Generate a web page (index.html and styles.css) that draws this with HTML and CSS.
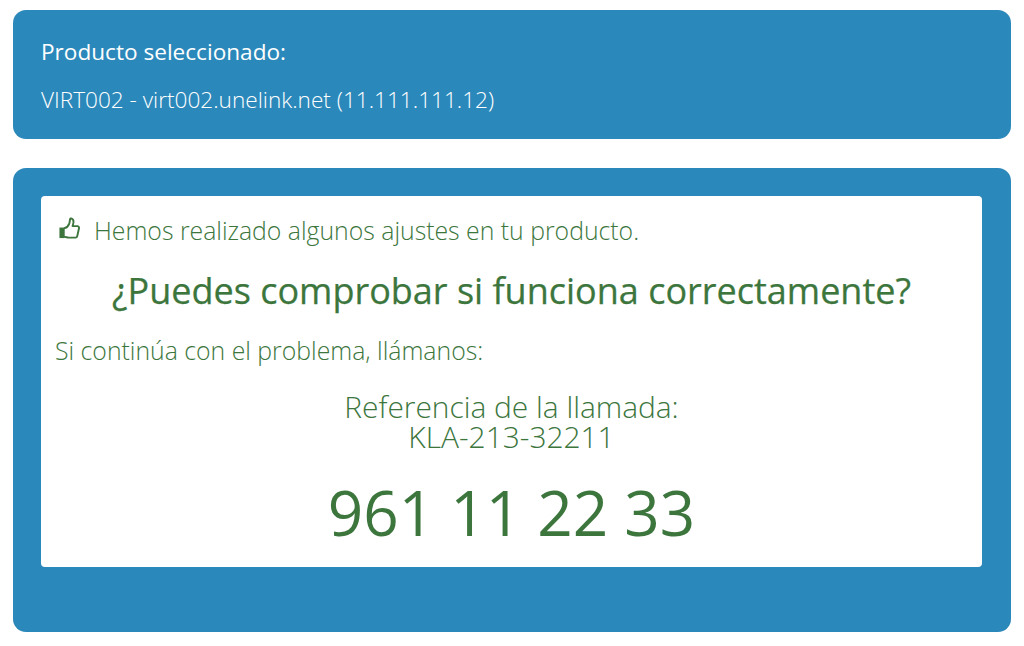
FILE: index.html
```html
<!DOCTYPE html>
<html lang="es">
<head>
<meta charset="utf-8">
<title>Producto seleccionado</title>
<link rel="stylesheet" href="styles.css">
</head>
<body>
<main class="page">
  <section class="card card-product">
    <h2 class="product-title">Producto seleccionado:</h2>
    <p class="product-name">VIRT002 - virt002.unelink.net (11.111.111.12)</p>
  </section>
  <section class="card card-status">
    <div class="panel">
      <p class="notice">
        <svg class="thumb" viewBox="0 0 24 24" aria-hidden="true">
          <path class="thumb-cuff" d="M1.5 11h5.5v11H1.5z"/>
          <path class="thumb-line" d="M7 11.5c2 0 3.600-2.200 4.600-4.200.7-1.400.5-3 1-5 .2-.7 1-1 1.700-.7 2 .9 2.200 3.600 1.400 6.200l-.5 1.700h5c1.200 0 2 1 1.700 2.200l-1.800 8.300c-.2 1-1 1.500-2 1.500H11c-1.500 0-2.400-.8-4-.8"/>
        </svg>
        <span>Hemos realizado algunos ajustes en tu producto.</span>
      </p>
      <h1 class="question">¿Puedes comprobar si funciona correctamente?</h1>
      <p class="callus">Si continúa con el problema, llámanos:</p>
      <p class="reference">Referencia de la llamada:<br>KLA-213-32211</p>
      <p class="phone">961 11 22 33</p>
    </div>
  </section>
</main>
</body>
</html>
```

FILE: styles.css
```css
* { box-sizing: border-box; }
html, body { margin: 0; padding: 0; }
body {
  background: #fff;
  font-family: "Open Sans", "Liberation Sans", sans-serif;
}
.page {
  padding: 10px 13px 14px;
  display: flex;
  flex-direction: column;
  gap: 29px;
}
.card {
  background: #2b88ba;
  border-radius: 13px;
}
.card-product {
  height: 129px;
  padding: 27px 28px 0;
  color: #fff;
}
.product-title {
  margin: 0;
  font-size: 22.6px;
  line-height: 30px;
  font-weight: 500;
}
.product-name {
  margin: 18px 0 0;
  font-size: 22.6px;
  line-height: 30px;
  font-weight: 300;
}
.card-status {
  height: 464px;
  padding: 28px 29px 0 28px;
}
.panel {
  height: 371px;
  background: #fff;
  border-radius: 4px;
  padding: 16px 14px 0;
  color: #3c763d;
}
.notice {
  margin: 0;
  display: flex;
  align-items: center;
  gap: 13px;
  padding-left: 4px;
  font-size: 24.8px;
  line-height: 36px;
  font-weight: 300;
}
.thumb { width: 23px; height: 23px; flex: none; margin-top: -3px; margin-left: -1px; }
.thumb-cuff { fill: #3c763d; }
.thumb-line { fill: none; stroke: #3c763d; stroke-width: 2; stroke-linejoin: round; stroke-linecap: round; }
.question {
  margin: 18px 0 0;
  text-align: center;
  font-size: 36px;
  line-height: 50px;
  font-weight: 400;
  -webkit-text-stroke: 0.25px #3c763d;
}
.callus {
  margin: 16px 0 0;
  font-size: 24.8px;
  line-height: 36px;
  font-weight: 300;
}
.reference {
  margin: 24px 0 0;
  text-align: center;
  font-size: 29.9px;
  line-height: 30px;
  font-weight: 300;
}
.phone {
  margin: 20px 0 0;
  text-align: center;
  font-size: 62px;
  line-height: 80px;
  font-weight: 400;
}
```
